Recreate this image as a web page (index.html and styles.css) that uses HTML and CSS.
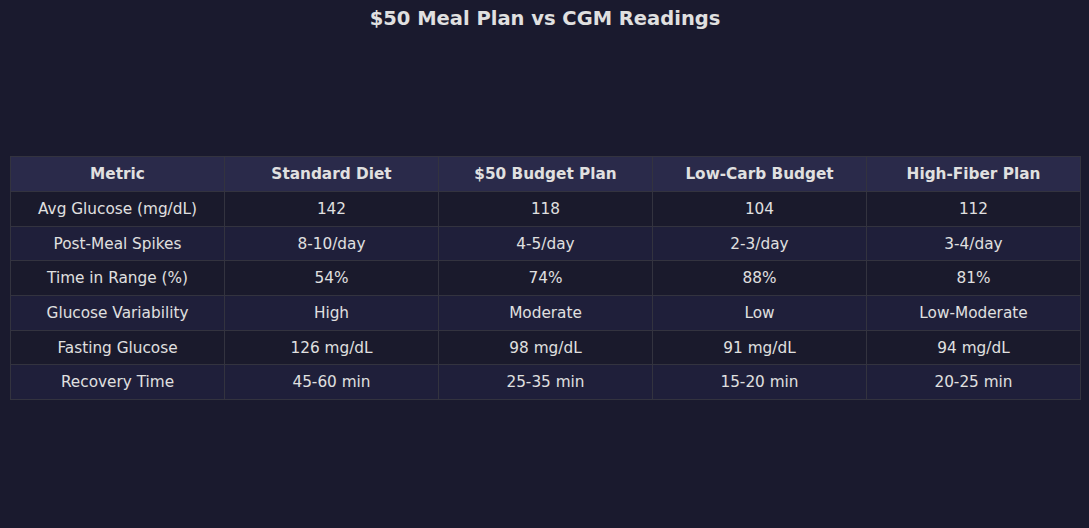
FILE: index.html
```html
<!DOCTYPE html>
<html>
<head>
<meta charset="utf-8">
<link rel="stylesheet" href="styles.css">
</head>
<body>
<div class="page">
  <h1 class="title">$50 Meal Plan vs CGM Readings</h1>
  <table class="grid">
    <thead>
      <tr><th>Metric</th><th>Standard Diet</th><th>$50 Budget Plan</th><th>Low-Carb Budget</th><th>High-Fiber Plan</th></tr>
    </thead>
    <tbody>
      <tr class="odd"><td>Avg Glucose (mg/dL)</td><td>142</td><td>118</td><td>104</td><td>112</td></tr>
      <tr class="even"><td>Post-Meal Spikes</td><td>8-10/day</td><td>4-5/day</td><td>2-3/day</td><td>3-4/day</td></tr>
      <tr class="odd"><td>Time in Range (%)</td><td>54%</td><td>74%</td><td>88%</td><td>81%</td></tr>
      <tr class="even"><td>Glucose Variability</td><td>High</td><td>Moderate</td><td>Low</td><td>Low-Moderate</td></tr>
      <tr class="odd"><td>Fasting Glucose</td><td>126 mg/dL</td><td>98 mg/dL</td><td>91 mg/dL</td><td>94 mg/dL</td></tr>
      <tr class="even"><td>Recovery Time</td><td>45-60 min</td><td>25-35 min</td><td>15-20 min</td><td>20-25 min</td></tr>
    </tbody>
  </table>
</div>
</body>
</html>
```
FILE: styles.css
```css
html, body {
  margin: 0;
  padding: 0;
  background: #1a1a2e;
  width: 1089px;
  height: 528px;
  overflow: hidden;
}
.page {
  font-family: "DejaVu Sans", sans-serif;
  color: #e0e0e0;
  padding: 0 9px 0 10px;
}
.title {
  margin: 0;
  padding-top: 7px;
  height: 156px;
  box-sizing: border-box;
  font-size: 19.5px;
  line-height: 24px;
  font-weight: bold;
  text-align: center;
  color: #e0e0e0;
}
.grid {
  width: 1071px;
  border-collapse: collapse;
  table-layout: fixed;
  font-size: 15.3px;
}
.grid tr {
  height: 34.7px;
}
.grid thead tr {
  height: 35px;
}
.grid th, .grid td {
  border: 1px solid #33333f;
  text-align: center;
  padding: 0;
  vertical-align: middle;
  line-height: 18px;
}
.grid th {
  background: #2a2a4a;
  font-weight: bold;
}
.grid tr.odd td { background: #1a1a2c; }
.grid tr.even td { background: #1f1f3a; }
```
